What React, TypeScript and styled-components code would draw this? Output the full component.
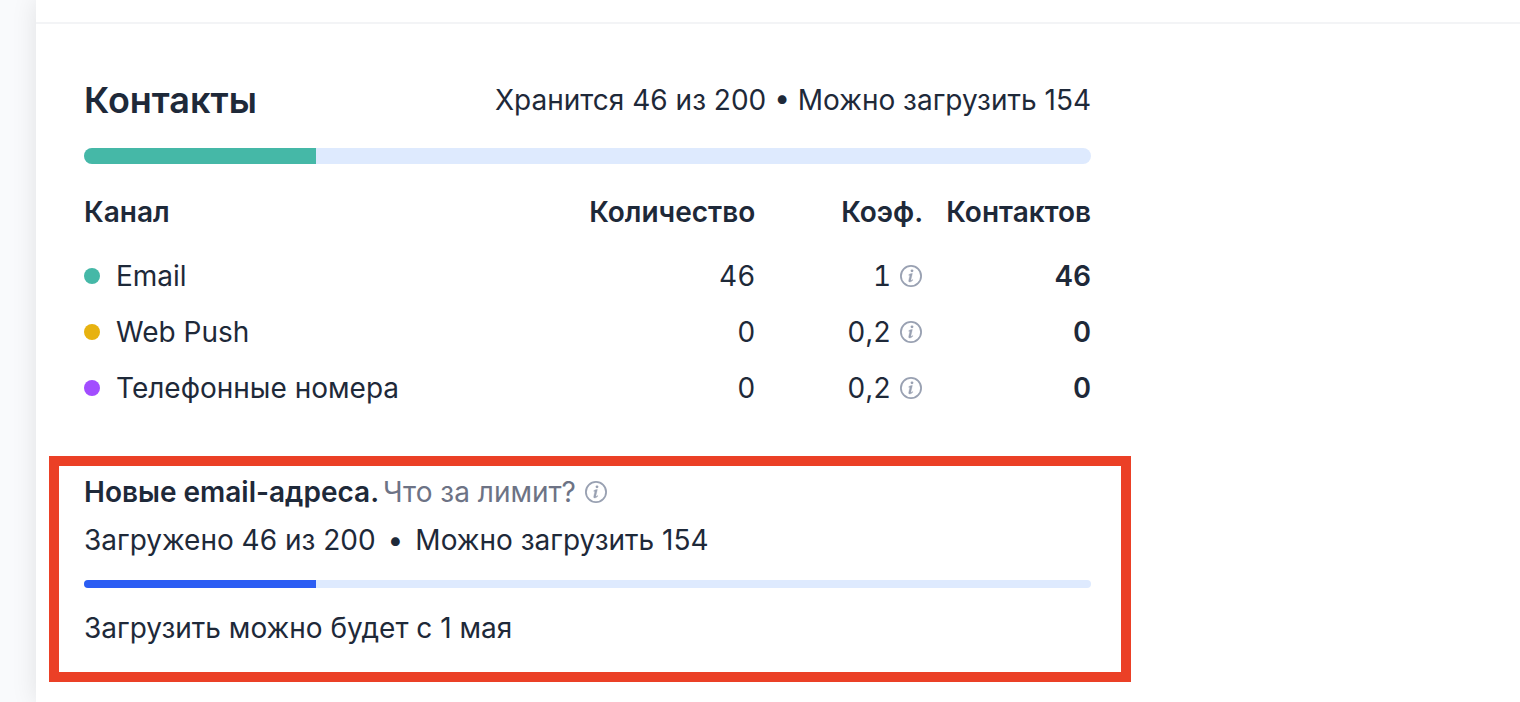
import React from "react";
import styled, { createGlobalStyle } from "styled-components";

const GlobalStyle = createGlobalStyle`
  *, *::before, *::after { box-sizing: border-box; }
  body {
    margin: 0;
    background: #f9fafc;
    color: #1e2939;
    font-family: Inter, "Liberation Sans", sans-serif;
    font-size: 28px;
    line-height: 40px;
    -webkit-font-smoothing: antialiased;
  }
`;

const Shell = styled.div`
  display: flex;
  min-height: 100vh;
`;

const Rail = styled.aside`
  flex: 0 0 36px;
  background: #f9fafc;
`;

const Panel = styled.main`
  flex: 1;
  min-width: 0;
  background: #ffffff;
  box-shadow: 0 0 24px rgba(0, 0, 0, 0.1);
`;

const TopBar = styled.div`
  height: 24px;
  border-bottom: 2px solid #f3f4f6;
`;

const Content = styled.div`
  max-width: 1103px;
  padding: 56px 48px 20px;
`;

const Header = styled.header`
  display: flex;
  align-items: center;
  justify-content: space-between;
  margin-bottom: 28px;
`;

const Title = styled.h1`
  margin: 0;
  font-size: 36px;
  line-height: 40px;
  font-weight: 600;
`;

const Text = styled.p`
  margin: 0;
`;

const Track = styled.div<{ $size: number }>`
  height: ${(p) => p.$size}px;
  border-radius: 8px;
  background: #deeafe;
  overflow: hidden;
`;

const Fill = styled.div<{ $color: string }>`
  height: 100%;
  background: ${(p) => p.$color};
`;

const Table = styled.table`
  width: 100%;
  margin-top: 12px;
  border-collapse: collapse;
  table-layout: fixed;
`;

const HeadCell = styled.th<{ $wide?: boolean }>`
  width: ${(p) => (p.$wide ? "50%" : "auto")};
  height: 72px;
  padding: 0;
  font-weight: 600;
  text-align: ${(p) => (p.$wide ? "left" : "right")};
`;

const Cell = styled.td<{ $strong?: boolean }>`
  height: 56px;
  padding: 0;
  text-align: right;
  font-weight: ${(p) => (p.$strong ? 600 : 400)};
  font-variant-numeric: tabular-nums;
`;

const RowHead = styled.th`
  height: 56px;
  padding: 0;
  font-weight: 400;
  text-align: left;
`;

const Channel = styled.div`
  display: flex;
  align-items: center;
  gap: 16px;
`;

const Dot = styled.span<{ $color: string }>`
  width: 16px;
  height: 16px;
  border-radius: 50%;
  background: ${(p) => p.$color};
`;

const Coefficient = styled.div`
  display: flex;
  align-items: center;
  justify-content: flex-end;
  gap: 8px;
`;

const InfoButton = styled.button`
  display: flex;
  padding: 0;
  border: 0;
  background: none;
  color: #99a1b2;
  cursor: pointer;
`;

const Highlight = styled.section`
  margin: 40px -40px 0 -35px;
  padding: 6px 30px 24px 25px;
  border: 10px solid #eb4026;
`;

const LimitTitle = styled.div`
  display: flex;
  align-items: center;
  margin-bottom: 8px;
`;

const LimitName = styled.h2`
  margin: 0 4px 0 0;
  font-size: 28px;
  line-height: 40px;
  font-weight: 600;
`;

const LimitHint = styled.span`
  margin-right: 8px;
  color: #6d7385;
`;

const Stats = styled.div`
  display: flex;
  gap: 12px;
  margin-bottom: 20px;
`;

const Note = styled.p`
  margin: 20px 0 0;
`;

function Info() {
  return (
    <InfoButton type="button" aria-label="Подробнее">
      <svg width="24" height="24" viewBox="0 0 24 24" fill="none" stroke="currentColor" aria-hidden="true">
        <circle cx="12" cy="12" r="10.1" strokeWidth="1.8" />
        <path
          d="M9.7 10.7C10.8 9.8 12.1 9.4 13.4 9.4L11.9 15.8C11.7 16.7 12.4 16.5 13.7 15.5L14 16.1C12.6 17.6 11.2 18.2 10.3 17.9C9.5 17.6 9.6 16.8 9.8 15.9L10.9 11.3L9.9 11.4Z"
          fill="currentColor"
          strokeWidth="0.3"
        />
        <circle cx="13" cy="6.8" r="1.4" fill="currentColor" stroke="none" />
      </svg>
    </InfoButton>
  );
}

function Progress({ label, percent, color, size }: { label: string; percent: number; color: string; size: number }) {
  return (
    <Track $size={size} role="progressbar" aria-label={label} aria-valuenow={percent} aria-valuemin={0} aria-valuemax={100}>
      <Fill $color={color} style={{ width: `${percent}%` }} />
    </Track>
  );
}

const stored = 46;
const limit = 200;
const percent = (stored / limit) * 100;

const channels = [
  { name: "Email", color: "#45b8a7", count: "46", rate: "1", contacts: "46" },
  { name: "Web Push", color: "#e7b210", count: "0", rate: "0,2", contacts: "0" },
  { name: "Телефонные номера", color: "#a24dff", count: "0", rate: "0,2", contacts: "0" },
];

export default function App() {
  return (
    <>
      <GlobalStyle />
      <Shell>
        <Rail />
        <Panel>
          <TopBar />
          <Content>
            <Header>
              <Title>Контакты</Title>
              <Text>{`Хранится ${stored} из ${limit} • Можно загрузить ${limit - stored}`}</Text>
            </Header>
            <Progress label="Контакты" percent={percent} color="#45b8a7" size={16} />
            <Table>
              <thead>
                <tr>
                  <HeadCell $wide scope="col">Канал</HeadCell>
                  <HeadCell scope="col">Количество</HeadCell>
                  <HeadCell scope="col">Коэф.</HeadCell>
                  <HeadCell scope="col">Контактов</HeadCell>
                </tr>
              </thead>
              <tbody>
                {channels.map((c) => (
                  <tr key={c.name}>
                    <RowHead scope="row">
                      <Channel>
                        <Dot $color={c.color} />
                        {c.name}
                      </Channel>
                    </RowHead>
                    <Cell>{c.count}</Cell>
                    <Cell>
                      <Coefficient>
                        {c.rate}
                        <Info />
                      </Coefficient>
                    </Cell>
                    <Cell $strong>{c.contacts}</Cell>
                  </tr>
                ))}
              </tbody>
            </Table>
            <Highlight>
              <LimitTitle>
                <LimitName>Новые email-адреса.</LimitName>
                <LimitHint>Что за лимит?</LimitHint>
                <Info />
              </LimitTitle>
              <Stats>
                <span>{`Загружено ${stored} из ${limit}`}</span>
                <span>•</span>
                <span>{`Можно загрузить ${limit - stored}`}</span>
              </Stats>
              <Progress label="Новые email-адреса" percent={percent} color="#2b5df3" size={8} />
              <Note>Загрузить можно будет с 1 мая</Note>
            </Highlight>
          </Content>
        </Panel>
      </Shell>
    </>
  );
}
